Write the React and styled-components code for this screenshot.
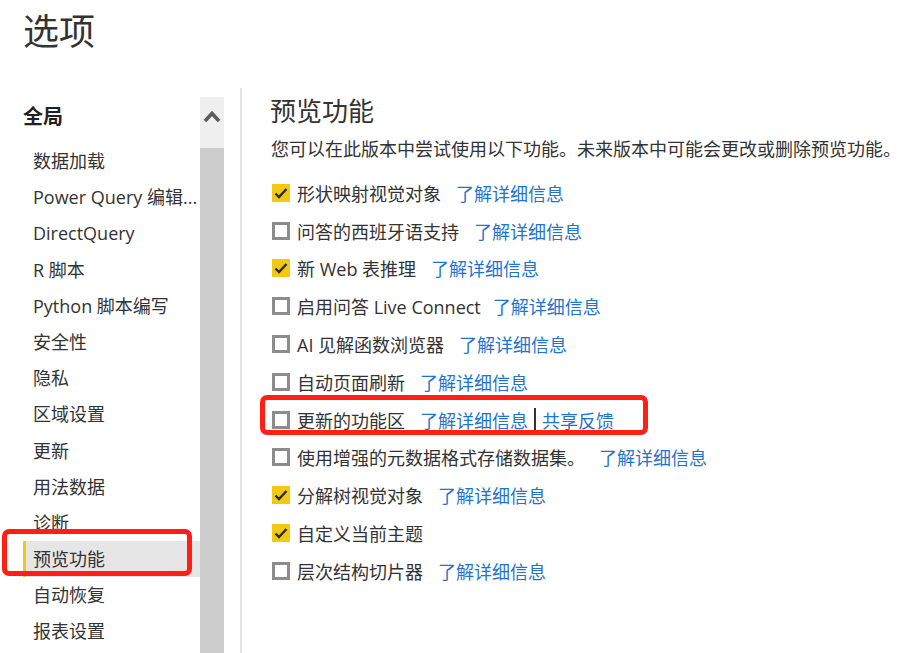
import React from "react";
import styled, { createGlobalStyle } from "styled-components";

const Global = createGlobalStyle`
  html, body { margin: 0; padding: 0; background: #fff; overflow: hidden; }
  body {
    font-family: "Segoe UI", "Open Sans", "Noto Sans CJK SC", sans-serif;
    color: #333;
  }
`;

const Page = styled.div`
  width: 907px;
  height: 653px;
  overflow: hidden;
  display: flex;
  flex-direction: column;
`;

const Title = styled.h1`
  margin: 10px 0 0 23px;
  font-size: 36px;
  line-height: 44px;
  font-weight: 400;
  color: #333;
`;

const Main = styled.div`
  display: flex;
  margin-top: 34px;
  flex: 1;
  min-height: 0;
`;

const Nav = styled.nav`
  width: 200px;
  flex: none;
  display: flex;
  flex-direction: column;
`;

const NavHeader = styled.div`
  margin: 11px 0 8px 23px;
  font-size: 20px;
  line-height: 36px;
  font-weight: 700;
  color: #222;
`;

const NavItem = styled.div`
  position: relative;
  flex: none;
  margin-left: 23px;
  padding-left: 7px;
  height: 36.2px;
  line-height: 36.2px;
  font-size: 18px;
  color: #333;
  white-space: nowrap;
  border-left: 3px solid ${(p) => (p.$active ? "#f2c811" : "transparent")};
  background: ${(p) => (p.$active ? "#e6e6e6" : "transparent")};
  overflow: ${(p) => (p.$active ? "visible" : "hidden")};
`;

const Scrollbar = styled.div`
  width: 24px;
  flex: none;
  margin-top: 9px;
  display: flex;
  flex-direction: column;
  background: #cdcdcd;
`;

const ScrollUp = styled.div`
  height: 51px;
  background: #efefef;
  display: flex;
  align-items: center;
  justify-content: center;
  padding-bottom: 14px;
  box-sizing: border-box;
`;

const Divider = styled.div`
  width: 2px;
  flex: none;
  margin-left: 16px;
  background: #e3e3e3;
`;

const Content = styled.section`
  flex: 1;
  padding-left: 28px;
  display: flex;
  flex-direction: column;
`;

const Heading = styled.h2`
  margin: 6px 0 0 0;
  font-size: 26px;
  line-height: 34px;
  font-weight: 400;
  color: #333;
`;

const Desc = styled.p`
  margin: 9px 0 13px 1px;
  font-size: 18px;
  line-height: 24px;
  white-space: nowrap;
  color: #333;
`;

const Row = styled.div`
  position: relative;
  display: flex;
  align-items: center;
  height: 37.8px;
  padding-left: 2px;
  font-size: 18px;
  white-space: nowrap;
`;

const Box = styled.span`
  width: 18px;
  height: 18px;
  box-sizing: border-box;
  flex: none;
  display: flex;
  align-items: center;
  justify-content: center;
  background: ${(p) => (p.$checked ? "#f2c811" : "#fff")};
  border: ${(p) => (p.$checked ? "none" : "3px solid #8c8c8c")};
`;

const Label = styled.span`
  margin-left: 7px;
  color: #333;
`;

const Link = styled.a`
  margin-left: ${(p) => p.$gap ?? 15}px;
  color: #1f74cc;
  text-decoration: none;
`;

const Sep = styled.span`
  width: 2px;
  height: 24px;
  margin: 0 6px;
  background: #333;
`;

const Callout = styled.div`
  position: absolute;
  border: 5px solid #ff1f14;
  border-radius: 7px;
  pointer-events: none;
  box-sizing: border-box;
`;

const NavCallout = styled(Callout)`
  left: -24px;
  top: -12px;
  width: 190px;
  height: 47px;
`;

const RowCallout = styled(Callout)`
  left: -10px;
  top: -6px;
  width: 388px;
  height: 40px;
`;

const Check = () => (
  <svg width="14" height="12" viewBox="0 0 14 12">
    <path d="M1.5 6.5 L5 10 L12.5 2" fill="none" stroke="#2b2b2b" strokeWidth="2.4" />
  </svg>
);

const navItems = [
  "数据加载",
  "Power Query 编辑...",
  "DirectQuery",
  "R 脚本",
  "Python 脚本编写",
  "安全性",
  "隐私",
  "区域设置",
  "更新",
  "用法数据",
  "诊断",
  "预览功能",
  "自动恢复",
  "报表设置",
];

const features = [
  { label: "形状映射视觉对象", checked: true, link: true },
  { label: "问答的西班牙语支持", checked: false, link: true },
  { label: "新 Web 表推理", checked: true, link: true },
  { label: "启用问答 Live Connect", checked: false, link: true, gap: 12 },
  { label: "AI 见解函数浏览器", checked: false, link: true },
  { label: "自动页面刷新", checked: false, link: true },
  { label: "更新的功能区", checked: false, link: true, feedback: true },
  { label: "使用增强的元数据格式存储数据集。", checked: false, link: true, gap: 14 },
  { label: "分解树视觉对象", checked: true, link: true },
  { label: "自定义当前主题", checked: true, link: false },
  { label: "层次结构切片器", checked: false, link: true },
];

export default function App() {
  return (
    <Page>
      <Global />
      <Title>选项</Title>
      <Main>
        <Nav>
          <NavHeader>全局</NavHeader>
          {navItems.map((t) => (
            <NavItem key={t} $active={t === "预览功能"}>
              {t}
              {t === "预览功能" && <NavCallout />}
            </NavItem>
          ))}
        </Nav>
        <Scrollbar>
          <ScrollUp>
            <svg width="18" height="14" viewBox="0 0 18 14">
              <path d="M2 12 L9 4.5 L16 12" fill="none" stroke="#5b5b5b" strokeWidth="3.6" />
            </svg>
          </ScrollUp>
        </Scrollbar>
        <Divider />
        <Content>
          <Heading>预览功能</Heading>
          <Desc>您可以在此版本中尝试使用以下功能。未来版本中可能会更改或删除预览功能。</Desc>
          {features.map((f) => (
            <Row key={f.label}>
              <Box $checked={f.checked}>{f.checked && <Check />}</Box>
              <Label>{f.label}</Label>
              {f.link && <Link href="#" $gap={f.gap}>了解详细信息</Link>}
              {f.feedback && (
                <>
                  <Sep />
                  <Link href="#" $gap={0}>共享反馈</Link>
                  <RowCallout />
                </>
              )}
            </Row>
          ))}
        </Content>
      </Main>
    </Page>
  );
}
